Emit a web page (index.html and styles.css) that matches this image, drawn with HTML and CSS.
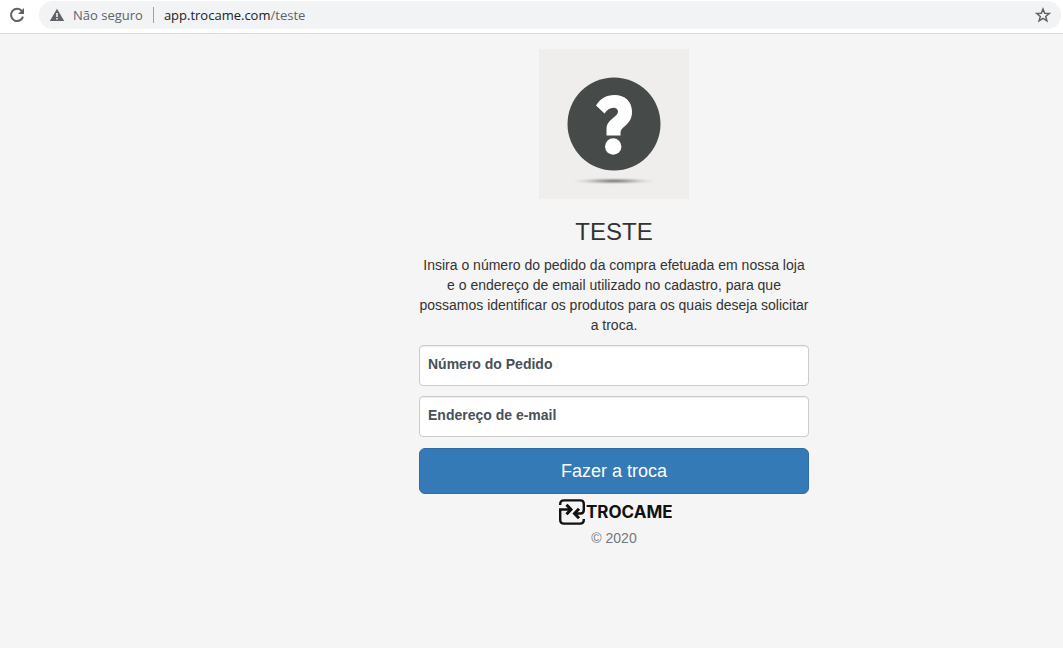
FILE: index.html
```html
<!DOCTYPE html>
<html lang="pt-BR">
<head>
<meta charset="utf-8">
<title>Teste - Trocame</title>
<link rel="stylesheet" href="styles.css">
</head>
<body>
<header class="toolbar">
  <button class="icon-button" type="button" aria-label="Recarregar">
    <svg width="16" height="16" viewBox="0 0 16 16"><path d="M13 4.2A6.1 6.1 0 1 0 14 9.6" fill="none" stroke="#5f6368" stroke-width="2"/><path d="M15 1v6H9z" fill="#5f6368"/></svg>
  </button>
  <div class="omnibox">
    <svg class="warning" width="16" height="14" viewBox="0 0 16 14"><path d="M8 .8 15.2 13H.8z" fill="#5f6368"/><path d="M7.2 5h1.6v4H7.2zM7.2 10h1.6v1.6H7.2z" fill="#f1f3f4"/></svg>
    <span class="security">Não seguro</span>
    <a class="address" href="#"><span class="host">app.trocame.com</span>/teste</a>
    <button class="icon-button star" type="button" aria-label="Favoritar">
      <svg width="16" height="16" viewBox="0 0 16 16"><path d="M8 2 9.7 6.2 14.2 6.5 10.7 9.4 11.9 13.8 8 11.4 4.1 13.8 5.3 9.4 1.8 6.5 6.3 6.2z" fill="none" stroke="#5f6368" stroke-width="1.5"/></svg>
    </button>
  </div>
</header>
<main class="page">
  <form class="exchange">
    <svg class="store-logo" width="150" height="150" viewBox="0 0 150 150" role="img" aria-label="Teste">
      <defs><radialGradient id="shade"><stop offset="0" stop-color="#777"/><stop offset=".4" stop-color="#aaa" stop-opacity=".8"/><stop offset="1" stop-color="#efeeec" stop-opacity="0"/></radialGradient></defs>
      <rect width="150" height="150" fill="#efeeed"/>
      <ellipse cx="75" cy="132" rx="46" ry="4" fill="url(#shade)"/>
      <circle cx="75" cy="75" r="46.5" fill="#464a49"/>
      <path d="M57 56.5C61 50 67 46 75.500 46 86 46 93 52.500 93 62.500 93 70 90 73.500 86 77 83 79.500 81.500 81 81.500 83.500V86.500H67.500V80C67.500 75 70.500 72 74 69 77 66.500 79 65 79 62.500 79 60.500 77 58.800 74.500 58.800 71 58.800 68 61 65.500 64.500Z" fill="#fff"/>
      <circle cx="74.200" cy="97.500" r="8.200" fill="#fff"/>
    </svg>
    <h1 class="title">TESTE</h1>
    <p class="intro">Insira o número do pedido da compra efetuada em nossa loja e o endereço de email utilizado no cadastro, para que possamos identificar os produtos para os quais deseja solicitar a troca.</p>
    <div class="field">
      <input class="control" id="pedido" type="text">
      <label class="label" for="pedido">Número do Pedido</label>
    </div>
    <div class="field">
      <input class="control" id="email" type="email">
      <label class="label" for="email">Endereço de e-mail</label>
    </div>
    <button class="submit" type="submit">Fazer a troca</button>
    <div class="brand">
      <svg width="26" height="26" viewBox="0 0 26 26" fill="none" stroke="#111" stroke-width="2.400"><path d="M1.200 6V5Q1.200 1.400 5 1.400H21.500Q24.800 1.400 24.800 5V11Q24.800 14.500 21.500 14.500H16M24.800 20V21Q24.800 24.600 21 24.600H5Q1.200 24.600 1.200 21V10.500H11"/><path d="M7.500 5.800 12 10.500 7.500 15.200M20 9.800 15.500 14.500 20 19.200" stroke-width="3"/></svg>
      <svg class="wordmark" width="86" height="20" viewBox="0 0 86 20" role="img" aria-label="TROCAME"><text x="0" y="16">TROCAME</text></svg>
    </div>
    <p class="copyright">© 2020</p>
  </form>
</main>
</body>
</html>
```
FILE: styles.css
```css
* { box-sizing: border-box; }

body {
  margin: 0;
  min-height: 100vh;
  background: #f5f5f5;
  color: #333;
  font: 14px/20px "Liberation Sans", Arial, sans-serif;
}

.toolbar {
  display: flex;
  align-items: flex-start;
  gap: 14px;
  padding: 1px 2px 4px 9px;
  background: #fff;
  border-bottom: 1px solid #dadce0;
}

.icon-button {
  display: flex;
  align-items: center;
  height: 28px;
  padding: 0;
  border: 0;
  background: none;
}

.omnibox {
  display: flex;
  flex: 1;
  align-items: center;
  height: 28px;
  padding: 0 10px;
  border-radius: 14px;
  background: #f1f3f4;
  color: #5f6368;
  font: 13px/20px "Open Sans", sans-serif;
}

.security {
  margin-left: 8px;
  padding-right: 10px;
  border-right: 1px solid #9aa0a6;
  line-height: 16px;
}

.address {
  margin-left: 10px;
  color: #5f6368;
  text-decoration: none;
}

.host { color: #202124; }

.star { margin-left: auto; }

.page {
  display: flex;
  justify-content: center;
  padding: 15px 0 15px 165px;
}

.exchange {
  display: flex;
  flex: 0 1 390px;
  flex-direction: column;
}

.store-logo { align-self: center; }

.title {
  margin: 20px 0 10px;
  font-size: 24px;
  font-weight: 400;
  line-height: 26px;
  text-align: center;
}

.intro {
  margin: 0 0 10px;
  text-align: center;
}

.field {
  position: relative;
  margin-bottom: 10px;
}

.control {
  display: block;
  width: 100%;
  height: 41px;
  padding: 8px;
  border: 1px solid #ccc;
  border-radius: 4px;
  background: #fff;
  box-shadow: inset 0 1px 1px rgba(0, 0, 0, .075);
  font: inherit;
}

.label {
  position: absolute;
  top: 9px;
  left: 9px;
  color: #495057;
  font-weight: 700;
}

.submit {
  height: 46px;
  margin-top: 1px;
  border: 1px solid #2e6da4;
  border-radius: 6px;
  background: #337ab7;
  color: #fff;
  font: 18px/24px "Liberation Sans", Arial, sans-serif;
}

.brand {
  display: flex;
  align-items: center;
  justify-content: center;
  gap: 1px;
  padding: 5px 0 3px 3px;
}

.wordmark {
  fill: #111;
  font: 700 17px Inter, sans-serif;
}

.copyright {
  margin: 0;
  color: #777;
  text-align: center;
}
```
